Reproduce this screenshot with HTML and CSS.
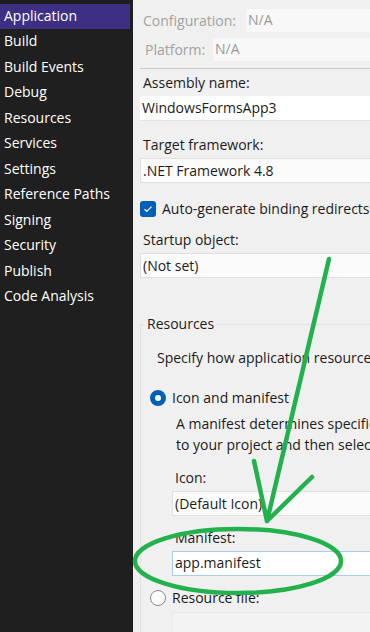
FILE: index.html
```html
<!DOCTYPE html>
<html lang="en">
<head>
    <meta charset="UTF-8">
    <meta name="viewport" content="width=device-width, initial-scale=1.0">
    <title>Project Properties</title>
    <link rel="stylesheet" href="styles.css">
</head>
<body>
<div class="page">
    <div class="sidebar">
        <div class="nav-item selected">Application</div>
        <div class="nav-item">Build</div>
        <div class="nav-item">Build Events</div>
        <div class="nav-item">Debug</div>
        <div class="nav-item">Resources</div>
        <div class="nav-item">Services</div>
        <div class="nav-item">Settings</div>
        <div class="nav-item">Reference Paths</div>
        <div class="nav-item">Signing</div>
        <div class="nav-item">Security</div>
        <div class="nav-item">Publish</div>
        <div class="nav-item">Code Analysis</div>
    </div>

    <div class="main">
        <div class="config-row first">
            <span class="muted">Configuration:</span>
            <div class="ro-box">N/A</div>
        </div>
        <div class="config-row">
            <span class="muted plat">Platform:</span>
            <div class="ro-box">N/A</div>
        </div>
        <div class="divider"></div>

        <label class="field-label">Assembly name:</label>
        <div class="input">WindowsFormsApp3</div>

        <label class="field-label gap">Target framework:</label>
        <div class="select">.NET Framework 4.8</div>

        <div class="check-row">
            <span class="checkbox">
                <svg width="10" height="8" viewBox="0 0 10 8"><path d="M1.5 4.2 L3.8 6.3 L8.5 1.6" fill="none" stroke="#fff" stroke-width="1.2"/></svg>
            </span>
            <span>Auto-generate binding redirects</span>
        </div>

        <label class="field-label">Startup object:</label>
        <div class="select">(Not set)</div>

        <fieldset class="group">
            <legend>Resources</legend>
            <div class="intro">Specify how application resources will be managed:</div>

            <div class="radio-row">
                <span class="radio on"></span>
                <span>Icon and manifest</span>
            </div>
            <div class="sub">
                <p class="desc">A manifest determines specific settings for an application. To embed a custom manifest, first add it<br>to your project and then select it from the list below.</p>
                <label class="field-label icon-label">Icon:</label>
                <div class="select">(Default Icon)</div>
                <label class="field-label manifest-label">Manifest:</label>
                <div class="input focus">app.manifest</div>
            </div>

            <div class="radio-row second">
                <span class="radio"></span>
                <span>Resource file:</span>
            </div>
            <div class="sub">
                <div class="disabled-box"></div>
            </div>
        </fieldset>
    </div>

    <svg class="markup" width="370" height="632" viewBox="0 0 370 632">
        <g fill="none" stroke="#22b14c" stroke-width="4.5" stroke-linecap="round" stroke-linejoin="round">
            <path d="M329 259 L267 521"/>
            <path d="M254 461 L267 521 L312 477"/>
            <ellipse cx="238" cy="561" rx="103" ry="32"/>
        </g>
    </svg>
</div>
</body>
</html>
```

FILE: styles.css
```css
body {
    margin: 0;
    padding: 0;
    font-family: "Open Sans", "Noto Sans", sans-serif;
    font-size: 14px;
    color: #1b1b1b;
    background-color: #f0f0f0;
    overflow: hidden;
}

.page {
    display: flex;
    width: 370px;
    height: 632px;
    overflow: hidden;
    position: relative;
}

.sidebar {
    width: 133px;
    flex-shrink: 0;
    background-color: #1f1f1f;
    padding-top: 3.5px;
    box-sizing: border-box;
}

.nav-item {
    height: 25.5px;
    line-height: 24px;
    padding-left: 4px;
    color: #ffffff;
    width: 130px;
    box-sizing: border-box;
    white-space: nowrap;
}

.nav-item.selected {
    background-color: #3e2f85;
}

.main {
    flex: 1;
    padding-left: 7px;
    min-width: 0;
}

.config-row {
    display: flex;
    align-items: center;
    height: 23px;
    margin-top: 6px;
    white-space: nowrap;
}

.config-row.first {
    margin-top: 9px;
}

.muted {
    color: #a2a2a2;
    padding-left: 3px;
    width: 103px;
    flex-shrink: 0;
}

.muted.plat {
    padding-left: 5px;
    width: 68px;
}

.ro-box {
    flex: 1;
    height: 23px;
    line-height: 22px;
    padding-left: 2px;
    background-color: #f8f8f8;
    color: #9a9a9a;
}

.divider {
    height: 1px;
    background-color: #c9c9c9;
    margin-top: 7px;
}

.field-label {
    display: block;
    padding-left: 3px;
    height: 20px;
    line-height: 20px;
    margin-top: 4px;
    margin-bottom: 3px;
    white-space: nowrap;
}

.field-label.gap {
    margin-top: 14px;
}

.input,
.select {
    width: 300px;
    height: 25px;
    line-height: 24px;
    padding-left: 2px;
    box-sizing: border-box;
    white-space: nowrap;
}

.input {
    background-color: #ffffff;
    border-bottom: 1px solid #e3e3e3;
}

.select {
    background-color: #fbfbfb;
    border: 1px solid #e0e0e0;
    border-right: none;
    line-height: 23px;
}

.input.focus {
    border: 1px solid #a6cdf0;
    border-right: none;
    line-height: 21px;
}

.check-row {
    display: flex;
    align-items: center;
    gap: 6px;
    margin-top: 16px;
    margin-bottom: 12px;
    white-space: nowrap;
}

.checkbox {
    width: 16px;
    height: 16px;
    border-radius: 3px;
    background-color: #005fb8;
    display: flex;
    align-items: center;
    justify-content: center;
    flex-shrink: 0;
}

.group {
    margin: 37px 0 0 0;
    padding: 0;
    border: 1px solid #e2e2e2;
    border-right: none;
    width: 400px;
    height: 320px;
    box-sizing: border-box;
}

.group legend {
    padding: 0 2px;
    margin-left: 4px;
    line-height: 18px;
}

.intro {
    padding-left: 16px;
    margin-top: 15px;
    line-height: 20px;
    white-space: nowrap;
}

.radio-row {
    display: flex;
    align-items: center;
    gap: 6px;
    margin-top: 20px;
    padding-left: 9px;
    white-space: nowrap;
}

.radio-row.second {
    margin-top: 12px;
}

.radio {
    width: 16px;
    height: 16px;
    border-radius: 50%;
    border: 1px solid #8a8a8a;
    box-sizing: border-box;
    background-color: #fbfbfb;
    flex-shrink: 0;
}

.radio.on {
    border: 5px solid #005fb8;
    background-color: #ffffff;
}

.sub {
    padding-left: 31px;
}

.desc {
    margin: 6px 0 0 4px;
    line-height: 21px;
    white-space: nowrap;
}

.field-label.icon-label {
    margin-top: 13px;
}

.field-label.manifest-label {
    margin-top: 12px;
}

.disabled-box {
    margin-top: 5px;
    height: 30px;
    background-color: #f3f3f3;
    border: 1px solid #e8e8e8;
}

.markup {
    position: absolute;
    left: 0;
    top: 0;
    pointer-events: none;
}
```
